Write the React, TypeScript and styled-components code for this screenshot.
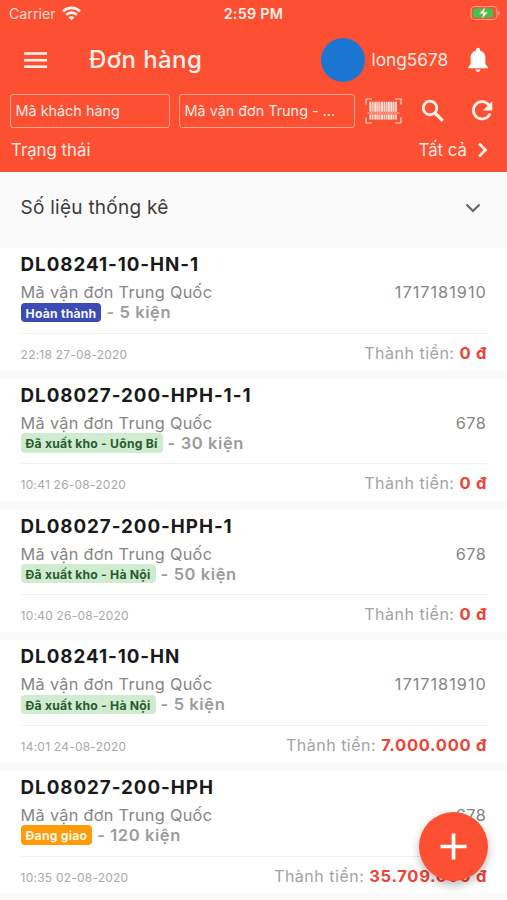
import React from "react";
import styled, { createGlobalStyle } from "styled-components";

const GlobalStyle = createGlobalStyle`
  *, *::before, *::after { box-sizing: border-box; }
  body { margin: 0; background: #fafafa; }
`;

const ACCENT = "#fd4f31";

const Screen = styled.div`
  width: 507px;
  height: 900px;
  overflow: hidden;
  position: relative;
  background: #fafafa;
  font-family: Inter, "Liberation Sans", sans-serif;
  display: flex;
  flex-direction: column;
`;

const Header = styled.header`
  height: 172px;
  flex: none;
  background: ${ACCENT};
  color: #ffeae3;
`;

const StatusBar = styled.div`
  height: 28px;
  display: grid;
  grid-template-columns: 1fr auto 1fr;
  align-items: center;
  padding: 0 6px 2px 9px;
`;

const Carrier = styled.div`
  display: flex;
  align-items: center;
  gap: 6px;
  font-size: 14.2px;
  color: #ffdcd2;
`;

const Clock = styled.div`
  margin-right: 3px;
  font-size: 14.3px;
  font-weight: 600;
  letter-spacing: 0.3px;
  color: #fff0ea;
`;

const Battery = styled.svg`
  justify-self: end;
`;

const AppBar = styled.div`
  height: 64px;
  display: flex;
  align-items: center;
  padding: 0 18px 1px 24px;
`;

const Title = styled.h1`
  margin: 0 auto 0 42px;
  font-size: 24px;
  font-weight: 500;
  letter-spacing: 0.4px;
  color: #fff2ed;
`;

const Avatar = styled.div`
  width: 44px;
  height: 44px;
  border-radius: 50%;
  background: #1b76d2;
`;

const UserName = styled.span`
  margin: 0 18.5px 0 6.5px;
  width: 77px;
  font-size: 17.3px;
  white-space: nowrap;
`;

const Filters = styled.div`
  height: 38px;
  display: flex;
  align-items: center;
  padding: 0 14px 0 10px;
`;

const Field = styled.div<{ $width: number }>`
  width: ${(p) => p.$width}px;
  height: 34px;
  margin-right: 9px;
  padding-left: 4.5px;
  border: 1px solid #ffa48f;
  border-radius: 3px;
  font-size: 14.4px;
  line-height: 32px;
  white-space: nowrap;
`;

const FilterIcons = styled.div`
  flex: 1;
  display: grid;
  grid-template-columns: 37px 24px 22px;
  column-gap: 19px;
  align-items: center;
  padding-left: 1px;

  > :last-child {
    margin-left: 7px;
  }
`;

const StateRow = styled.div`
  height: 40px;
  display: flex;
  align-items: center;
  justify-content: space-between;
  padding: 0 18px 0 11px;
  font-size: 16.8px;
`;

const StateValue = styled.div`
  display: flex;
  align-items: center;
  gap: 9px;
`;

const Stats = styled.section`
  height: 76px;
  flex: none;
  display: flex;
  align-items: center;
  justify-content: space-between;
  padding: 0 26px 5px 20.6px;
  font-size: 19px;
  letter-spacing: 0.25px;
  color: #3c3c3c;
`;

const List = styled.main`
  display: flex;
  flex-direction: column;
  gap: 8.5px;
`;

const Card = styled.article`
  height: 122.2px;
  flex: none;
  padding: 6.3px 20px 0 20.6px;
  background: #fff;
`;

const Code = styled.h2`
  margin: 0 0 6px;
  line-height: 22px;
  font-size: 18.8px;
  font-weight: 650;
  letter-spacing: 0.95px;
  color: #1a1a1a;
  white-space: nowrap;
`;

const Waybill = styled.div`
  height: 20px;
  line-height: 20px;
  display: flex;
  justify-content: space-between;
  font-size: 16.3px;
  letter-spacing: 0.3px;
  color: #868686;
`;

const WaybillNumber = styled.span<{ $spacing: number }>`
  letter-spacing: ${(p) => p.$spacing}px;
  margin-right: ${(p) => 1.2 - p.$spacing}px;
`;

type Tone = "done" | "shipped" | "delivering";

const tones: Record<Tone, { bg: string; fg: string }> = {
  done: { bg: "#3c4bb5", fg: "#f4f5ff" },
  shipped: { bg: "#cfebd0", fg: "#2b5a2f" },
  delivering: { bg: "#ff9a08", fg: "#fff8ea" },
};

const StatusLine = styled.div`
  height: 20px;
  display: flex;
  align-items: center;
`;

const Badge = styled.span<{ $tone: Tone }>`
  height: 19.5px;
  padding: 0 5px;
  margin-right: 5px;
  border-radius: 4px;
  background: ${(p) => tones[p.$tone].bg};
  color: ${(p) => tones[p.$tone].fg};
  font-size: 12.2px;
  font-weight: 700;
  letter-spacing: 0.22px;
  line-height: 21px;
`;

const Parcels = styled.span`
  font-size: 16.5px;
  font-weight: 600;
  line-height: 20px;
  letter-spacing: 0.6px;
  color: #9c9c9c;
`;

const CardFooter = styled.div`
  margin-top: 10.5px;
  padding-top: 9px;
  border-top: 1px solid #f0f0f0;
  display: flex;
  align-items: baseline;
  justify-content: space-between;
  line-height: 20px;
`;

const Time = styled.time`
  font-size: 12px;
  letter-spacing: 0.22px;
  color: #a9a9a9;
`;

const Total = styled.div`
  font-size: 16px;
  letter-spacing: 0.5px;
  color: #a3a3a3;
`;

const Amount = styled.strong`
  font-size: 16.5px;
  font-weight: 700;
  letter-spacing: 0.7px;
  color: #ef4335;
`;

const AddButton = styled.button`
  position: absolute;
  left: 418.5px;
  top: 812px;
  width: 69px;
  height: 69px;
  padding: 0;
  border: 0;
  border-radius: 50%;
  display: grid;
  place-items: center;
  background: ${ACCENT};
  box-shadow: 0 5px 8px rgba(0, 0, 0, 0.22), 0 1px 12px rgba(0, 0, 0, 0.06);
`;

const WifiIcon = () => (
  <svg width="19" height="15" viewBox="0 0 19 15" fill="none" stroke="#fff4ef" strokeWidth="2.7">
    <path d="M1 5.4C5.8 .8 13.2 .8 18 5.4" />
    <path d="M4.1 8.8C7.2 5.9 11.8 5.9 14.9 8.8" />
    <path d="M9.5 14.4 6.5 11.3C8.2 9.8 10.8 9.8 12.5 11.3Z" fill="#fff4ef" stroke="none" />
  </svg>
);

const BatteryIcon = () => (
  <Battery width="31" height="16" viewBox="0 0 31 16">
    <rect x="1" y="1.5" width="26" height="13" rx="3.8" fill="none" stroke="#ffa18c" strokeWidth="1.1" />
    <path d="M28.4 5.7c2 .5 2 4.1 0 4.6z" fill="#ffa18c" />
    <rect x="3" y="3.4" width="20" height="9.2" rx="2.2" fill="#36c84f" />
    <path d="M15.2 2.2 9 8.8h4L11.8 13.8 18 7.2h-4z" fill="#fff" stroke="#fd7a50" strokeWidth=".5" />
  </Battery>
);

const MenuIcon = () => (
  <svg width="23" height="18" viewBox="0 0 23 18" fill="#fff0ea">
    <rect y="1.2" width="23" height="2.6" />
    <rect y="7.9" width="23" height="2.6" />
    <rect y="14.4" width="23" height="2.6" />
  </svg>
);

const BellIcon = () => (
  <svg width="22" height="26" viewBox="0 0 22 26" fill="#fff">
    <path d="M11 .8c1.2 0 2 .8 2 2v.7c3.4.9 5.4 3.8 5.4 7.2v6.6l2.6 2.9v1.1H1v-1.1l2.6-2.9v-6.6c0-3.4 2-6.3 5.4-7.2v-.7c0-1.2.8-2 2-2z" />
    <path d="M8.6 22.5h4.8a2.4 2.4 0 0 1-4.8 0z" />
  </svg>
);

const bars: [number, number][] = [
  [4.5, 1.6], [7.4, 0.8], [9.5, 1.9], [12.4, 0.9], [14.3, 0.8], [16.2, 1.8],
  [19, 0.9], [21, 0.8], [22.8, 1.8], [25.6, 1.6], [28.3, 0.8], [30.2, 1.6],
];

const BarcodeIcon = () => (
  <svg width="37" height="26" viewBox="0 0 37 26">
    <path
      d="M1 6.5V1h6M30 1h6v5.5M36 19.5V25h-6M7 25H1v-5.5"
      fill="none"
      stroke="#ffd8cd"
      strokeWidth="1.2"
    />
    <rect x="4.5" y="3.8" width="27.5" height="10" fill="#fff" opacity=".38" />
    <rect x="4.5" y="16.5" width="27.5" height="5" fill="#fff" opacity=".38" />
    {bars.map(([x, w]) => (
      <g key={x} fill="#ffe7df">
        <rect x={x} y="3.8" width={w} height="10" />
        <rect x={x} y="16.5" width={w} height="5" />
      </g>
    ))}
    <path d="M2.5 15h32" stroke="#ffc4b5" strokeWidth="1" />
  </svg>
);

const SearchIcon = () => (
  <svg width="24" height="24" viewBox="0 0 24 24" fill="none" stroke="#fff2ed">
    <circle cx="9" cy="9" r="6.8" strokeWidth="2.7" />
    <path d="M14 14 21.8 21.8" strokeWidth="3.3" />
  </svg>
);

const RefreshIcon = () => (
  <svg width="22" height="22" viewBox="0 0 22 22">
    <path d="M17.9 5.2A8.6 8.6 0 1 0 19 13.4" fill="none" stroke="#fff2ed" strokeWidth="2.7" />
    <path d="M21.3 1v9.4h-9.4z" fill="#fff2ed" />
  </svg>
);

const ChevronRight = () => (
  <svg width="13" height="16" viewBox="0 0 13 16" fill="none" stroke="#fff0ea" strokeWidth="2.7">
    <path d="M3 1.5 9.5 8 3 14.5" />
  </svg>
);

const ChevronDown = () => (
  <svg width="16" height="10" viewBox="0 0 16 10" fill="none" stroke="#656565" strokeWidth="2.2">
    <path d="M1.5 1.5 8 8l6.5-6.5" />
  </svg>
);

const PlusIcon = () => (
  <svg width="27" height="27" viewBox="0 0 27 27" stroke="#fff" strokeWidth="3.7">
    <path d="M13.5 .5v26M.5 13.5h26" />
  </svg>
);

interface Order {
  code: string;
  waybill: string;
  spacing: number;
  tone: Tone;
  status: string;
  parcels: number;
  time: string;
  total: string;
}

const orders: Order[] = [
  { code: "DL08241-10-HN-1", waybill: "1717181910", spacing: 1, tone: "done", status: "Hoàn thành", parcels: 5, time: "22:18 27-08-2020", total: "0 đ" },
  { code: "DL08027-200-HPH-1-1", waybill: "678", spacing: 0.5, tone: "shipped", status: "Đã xuất kho - Uông Bí", parcels: 30, time: "10:41 26-08-2020", total: "0 đ" },
  { code: "DL08027-200-HPH-1", waybill: "678", spacing: 0.5, tone: "shipped", status: "Đã xuất kho - Hà Nội", parcels: 50, time: "10:40 26-08-2020", total: "0 đ" },
  { code: "DL08241-10-HN", waybill: "1717181910", spacing: 1, tone: "shipped", status: "Đã xuất kho - Hà Nội", parcels: 5, time: "14:01 24-08-2020", total: "7.000.000 đ" },
  { code: "DL08027-200-HPH", waybill: "678", spacing: 0.5, tone: "delivering", status: "Đang giao", parcels: 120, time: "10:35 02-08-2020", total: "35.709.000 đ" },
];

export default function App() {
  return (
    <Screen>
      <GlobalStyle />
      <Header>
        <StatusBar>
          <Carrier>
            Carrier <WifiIcon />
          </Carrier>
          <Clock>2:59 PM</Clock>
          <BatteryIcon />
        </StatusBar>
        <AppBar>
          <MenuIcon />
          <Title>Đơn hàng</Title>
          <Avatar />
          <UserName>long5678</UserName>
          <BellIcon />
        </AppBar>
        <Filters>
          <Field $width={160}>Mã khách hàng</Field>
          <Field $width={176}>Mã vận đơn Trung - ...</Field>
          <FilterIcons>
            <BarcodeIcon />
            <SearchIcon />
            <RefreshIcon />
          </FilterIcons>
        </Filters>
        <StateRow>
          <span>Trạng thái</span>
          <StateValue>
            Tất cả <ChevronRight />
          </StateValue>
        </StateRow>
      </Header>
      <Stats>
        Số liệu thống kê <ChevronDown />
      </Stats>
      <List>
        {orders.map((o) => (
          <Card key={o.code}>
            <Code>{o.code}</Code>
            <Waybill>
              <span>Mã vận đơn Trung Quốc</span>
              <WaybillNumber $spacing={o.spacing}>{o.waybill}</WaybillNumber>
            </Waybill>
            <StatusLine>
              <Badge $tone={o.tone}>{o.status}</Badge>
              <Parcels>- {o.parcels} kiện</Parcels>
            </StatusLine>
            <CardFooter>
              <Time>{o.time}</Time>
              <Total>
                Thành tiền: <Amount>{o.total}</Amount>
              </Total>
            </CardFooter>
          </Card>
        ))}
      </List>
      <AddButton aria-label="Thêm đơn hàng">
        <PlusIcon />
      </AddButton>
    </Screen>
  );
}
